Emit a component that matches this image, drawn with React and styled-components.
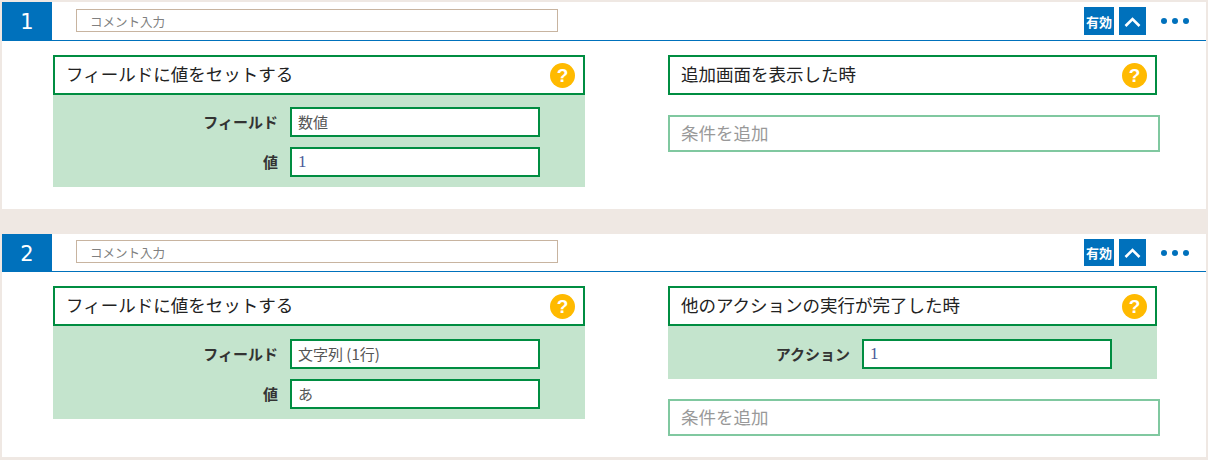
import styled, { createGlobalStyle } from 'styled-components';

const Global = createGlobalStyle`
    html, body {
        margin: 0;
        padding: 0;
        background: #efe8e3;
    }
    body {
        font-family: "Noto Sans CJK JP", "Noto Sans", sans-serif;
        color: #333;
    }
`;
const Page = styled.div`
    width: 1208px;
    height: 460px;
    padding: 2px 2px 0 2px;
    box-sizing: border-box;
    display: flex;
    flex-direction: column;
    gap: 25px;
    overflow: hidden;
`;
const Card = styled.section`
    background: #fff;
    width: 1204px;
    height: ${props => props.$height}px;
    flex: none;
`;
const Header = styled.div`
    display: flex;
    align-items: flex-start;
    height: ${props => props.$compact ? 37 : 38}px;
    box-sizing: content-box;
    border-bottom: 1px solid #0071bc;
`;
const Number = styled.div`
    width: 50px;
    height: 100%;
    background: #0071bc;
    color: #fff;
    font-family: "DejaVu Sans", sans-serif;
    font-size: 21px;
    line-height: 41px;
    text-align: center;
    flex: none;
`;
const Comment = styled.div`
    margin: ${props => props.$compact ? 6 : 7}px 0 0 24px;
    width: 482px;
    height: 23px;
    box-sizing: border-box;
    border: 1px solid #c8b4a0;
    padding-left: 13px;
    font-size: 12.5px;
    line-height: 23px;
    color: #808080;
`;
const Controls = styled.div`
    margin: 5px 0 0 auto;
    display: flex;
    align-items: center;
    height: ${props => props.$compact ? 27 : 28}px;
`;
const Badge = styled.div`
    width: 30px;
    height: 100%;
    background: #0071bc;
    color: #fff;
    font-size: 13px;
    font-weight: 700;
    display: flex;
    align-items: center;
    justify-content: center;
`;
const Toggle = styled.div`
    width: 27px;
    height: 100%;
    margin-left: 5px;
    background: #0071bc;
    display: flex;
    align-items: center;
    justify-content: center;
`;
const Dots = styled.div`
    display: flex;
    gap: 5px;
    margin: 0 17px 0 15px;
`;
const Dot = styled.span`
    width: 6px;
    height: 6px;
    border-radius: 50%;
    background: #0071bc;
`;
const Body = styled.div`
    display: flex;
    padding: 14px 0 0 51px;
`;
const Column = styled.div`
    width: ${props => props.$width}px;
    margin-right: ${props => props.$gap || 0}px;
    flex: none;
`;
const Title = styled.div`
    display: flex;
    align-items: center;
    justify-content: space-between;
    height: 40px;
    box-sizing: border-box;
    border: 2px solid #008d41;
    padding: 0 8px 0 11px;
    background: #fff;
    font-size: 17.5px;
    color: #222;
`;
const TitleText = styled.span`
    padding-bottom: 3px;
`;
const Help = styled.span`
    width: 25px;
    height: 25px;
    border-radius: 50%;
    background: #ffba00;
    color: #fff;
    font-family: "Liberation Sans", sans-serif;
    font-size: 19px;
    font-weight: 700;
    line-height: 25px;
    text-align: center;
`;
const Params = styled.div`
    display: flex;
    flex-direction: column;
    gap: 10px;
    padding: ${props => props.$top}px 0 10px;
    background: #c4e4cd;
`;
const Row = styled.div`
    display: flex;
    align-items: center;
`;
const Label = styled.label`
    width: ${props => props.$width}px;
    padding: 0 12px 2px 0;
    box-sizing: border-box;
    text-align: right;
    font-size: 15px;
    font-weight: 700;
    color: #333;
    flex: none;
`;
const Field = styled.div`
    width: 250px;
    height: 30px;
    box-sizing: border-box;
    border: 2px solid #008d41;
    background: #fff;
    padding-left: 6px;
    font-family: ${props => props.$numeric ? '"Liberation Serif", serif' : 'inherit'};
    font-size: ${props => props.$numeric ? 17 : 15}px;
    line-height: 25px;
    color: ${props => props.$numeric ? '#4a5a98' : '#555'};
`;
const AddCondition = styled.div`
    width: 492px;
    height: 37px;
    margin-top: 20px;
    box-sizing: border-box;
    border: 2px solid #80c8a0;
    padding-left: 11px;
    font-size: 17.5px;
    line-height: 32px;
    color: #999;
`;

const ChevronUp = () => (
    <svg width="17" height="11" viewBox="0 0 17 11" fill="none">
        <path d="M1.5 10 L8.5 3 L15.5 10" stroke="#fff" strokeWidth="2.6" />
    </svg>
);

const ActionPanel = ({ title, rows, labelWidth, padTop }) => (
    <>
        <Title>
            <TitleText>{title}</TitleText>
            <Help>?</Help>
        </Title>
        <Params $top={padTop}>
            {rows.map(row => (
                <Row key={row.label}>
                    <Label $width={labelWidth}>{row.label}</Label>
                    <Field $numeric={row.numeric}>{row.value}</Field>
                </Row>
            ))}
        </Params>
    </>
);

const Rule = ({ number, height, compact, fieldValue, value, valueNumeric, condition, conditionRows }) => (
    <Card $height={height}>
        <Header $compact={compact}>
            <Number>{number}</Number>
            <Comment $compact={compact}>コメント入力</Comment>
            <Controls $compact={compact}>
                <Badge>有効</Badge>
                <Toggle><ChevronUp /></Toggle>
                <Dots><Dot /><Dot /><Dot /></Dots>
            </Controls>
        </Header>
        <Body>
            <Column $width={532} $gap={83}>
                <ActionPanel
                    title="フィールドに値をセットする"
                    labelWidth={237}
                    padTop={compact ? 13 : 12}
                    rows={[
                        { label: 'フィールド', value: fieldValue },
                        { label: '値', value, numeric: valueNumeric },
                    ]}
                />
            </Column>
            <Column $width={489}>
                {conditionRows ? (
                    <ActionPanel title={condition} labelWidth={194} padTop={13} rows={conditionRows} />
                ) : (
                    <Title><TitleText>{condition}</TitleText><Help>?</Help></Title>
                )}
                <AddCondition>条件を追加</AddCondition>
            </Column>
        </Body>
    </Card>
);

const App = () => (
    <Page>
        <Global />
        <Rule
            number="1"
            height={207}
            fieldValue="数値"
            value="1"
            valueNumeric
            condition="追加画面を表示した時"
        />
        <Rule
            number="2"
            height={223}
            compact
            fieldValue="文字列 (1行)"
            value="あ"
            condition="他のアクションの実行が完了した時"
            conditionRows={[{ label: 'アクション', value: '1', numeric: true }]}
        />
    </Page>
);
export default App;
